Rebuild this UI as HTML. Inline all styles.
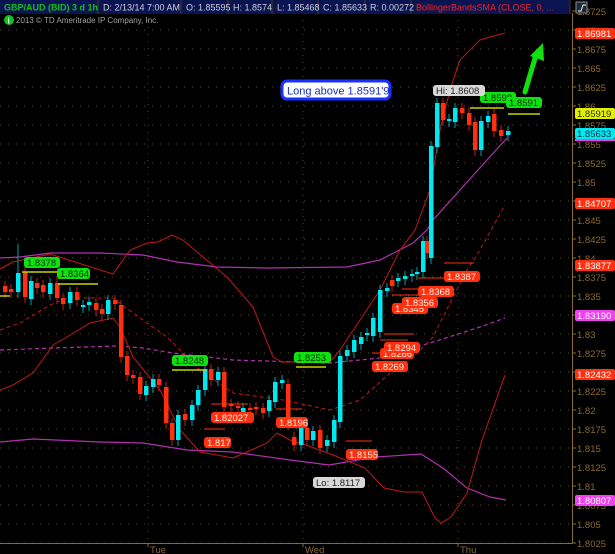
<!DOCTYPE html><html><head><meta charset="utf-8"><style>
body{margin:0;background:#000;width:615px;height:554px;overflow:hidden;font-family:"Liberation Sans",sans-serif}
svg{position:absolute;left:0;top:0}
</style></head><body>
<svg id="s" width="615" height="554" xmlns="http://www.w3.org/2000/svg" font-family="Liberation Sans, sans-serif"></svg>
<script>
var o='';
function Y(p){return 258+(1.84-p)*7600;}
for(var p=1.8725;p>1.8020;p-=0.0025){var y=Y(p).toFixed(1);o+='<line x1="0" x2="572" y1="'+y+'" y2="'+y+'" stroke="#5a4a28" stroke-dasharray="1 7"/>';
o+='<line x1="572" x2="576" y1="'+y+'" y2="'+y+'" stroke="#8a6a30"/>';
o+='<text x="577" y="'+(+y+4)+'" font-size="9.5" fill="#8a6a30">'+(Math.round(p*10000)/10000)+'</text>';}
[148,303,458].forEach(function(x){o+='<line x1="'+x+'" x2="'+x+'" y1="13" y2="543" stroke="#5a4a28" stroke-dasharray="1 6"/>';});
o+='<line x1="572.5" x2="572.5" y1="13" y2="543" stroke="#8a6a30"/><line x1="0" x2="573" y1="543.5" y2="543.5" stroke="#8a6a30"/>';
[['Tue',148],['Wed',303],['Thu',458]].forEach(function(d){o+='<line x1="'+d[1]+'" x2="'+d[1]+'" y1="543" y2="547" stroke="#8a6a30"/><text x="'+(d[1]+2)+'" y="553" font-size="9.5" fill="#8a6a30">'+d[0]+'</text>';});
function pl(pts,c,w,dash){o+='<polyline fill="none" stroke="'+c+'" stroke-width="'+w+'"'+(dash?' stroke-dasharray="'+dash+'"':'')+' points="'+pts+'"/>';}
pl('0,258 20,257 50,253 100,253 143,255 177,262 217,267 267,268 347,267 380,260 413,243 427,230 433,220 460,190 487,160 507,138','#b030b0',1.2);
pl('0,350 53,348 117,346 143,348 173,353 233,360 330,363 380,358 430,343 480,327 505,318','#b030b0',1.2,'4 3');
pl('0,442 33,439 100,442 143,443 187,450 233,452 290,460 329,465 376,457 421,454 443,468 467,488 490,497 506,500','#b030b0',1.2);
pl('0,269 13,262 50,254 113,274 130,250 147,243 158,242 172,235 183,240 203,257 227,277 253,307 273,357 282,362 330,362 340,350 360,320 380,290 400,250 415,230 430,190 440,130 450,90 460,60 480,40 490,37 505,33','#c01818',1);
pl('0,390 13,385 33,373 53,345 67,337 90,323 113,318 120,327 133,357 160,390 180,430 200,452 233,458 267,443 277,433 290,440 306,445 333,455 365,468 384,488 404,492 422,492 435,518 441,523 451,517 467,493 482,440 505,375','#c01818',1);
pl('0,330 20,323 50,305 67,298 113,298 133,313 167,337 200,370 233,393 283,400 330,410 360,400 390,373 413,357 433,337 453,297 467,270 480,250 505,205','#c01818',1,'4 3');
var C=[[3,286,292,0],[9,289,292,0],[16,273,292,1,244],[23,272,297,0],[29,281,299,1],[35,283,288,0],[41,285,292,0],[48,283,294,1],[55,283,298,0],[61,298,304,0],[68,292,303,1],[75,292,300,0],[81,305,307,1],[87,302,305,1],[94,303,310,0],[100,309,314,0],[106,300,314,1],[113,300,304,0],[119,305,357,0],[125,356,375,0],[131,375,378,0],[138,377,394,0],[144,386,395,1],[151,379,387,1],[157,379,385,0],[164,387,423,0],[170,423,440,0],[176,415,440,1],[183,414,420,0],[190,405,420,1],[196,390,405,1],[203,369,390,1],[209,369,380,0],[216,372,380,1],[222,372,407,0],[229,404,406,0],[236,406,408,0],[241,408,412,1],[248,408,410,0],[254,407,409,0],[261,408,413,0],[267,400,411,1],[273,382,402,1],[280,380,383,1],[286,384,424,0],[292,437,445,0],[299,427,445,1],[305,428,440,0],[311,431,440,1],[318,430,448,0],[325,440,446,1],[332,420,442,1],[338,356,422,1],[345,350,356,1],[352,340,352,1],[359,337,344,1],[365,333,335,1],[371,318,336,1],[378,290,332,1],[385,288,291,1],[390,280,286,0],[396,278,281,1],[403,276,279,1],[410,274,276,1],[415,272,274,1],[421,241,272,1],[425,241,253,0],[429,146,258,1],[435,103,147,1],[441,103,120,0],[447,119,121,1],[453,108,122,1],[460,108,113,0],[467,113,125,0],[473,122,150,0],[479,121,150,1],[486,116,122,1],[492,114,131,0],[499,130,136,0],[506,131,135,1]];
C.forEach(function(c){var col=c[3]?'#00e8f0':'#ff3010';var hi=c[4]||c[1]-5,lo=c[2]+6;
o+='<line x1="'+(c[0]+2)+'" x2="'+(c[0]+2)+'" y1="'+hi+'" y2="'+lo+'" stroke="'+(c[3]?'#00a0b0':'#c02010')+'"/>';
o+='<rect x="'+c[0]+'" y="'+c[1]+'" width="4.5" height="'+Math.max(2,c[2]-c[1])+'" fill="'+col+'"/>';});
[[0,10,296],[22,66,272],[58,98,284],[172,206,370],[296,326,367],[470,504,108],[508,540,114]].forEach(function(l){o+='<line x1="'+l[0]+'" x2="'+l[1]+'" y1="'+l[2]+'" y2="'+l[2]+'" stroke="#c8d400" stroke-width="1.5"/>';});
function lab(x,y,t,bg,fg,w){o+='<rect x="'+x+'" y="'+y+'" width="'+w+'" height="11" rx="3" fill="'+bg+'"/><text x="'+(x+3)+'" y="'+(y+9)+'" font-size="9.5" fill="'+fg+'">'+t+'</text>';}
lab(24,257,'1.8378','#10e010','#003000',36);lab(57,268,'1.8364','#10e010','#003000',33);
lab(172,355,'1.8248','#10e010','#003000',36);lab(294,352,'1.8253','#10e010','#003000',37);
lab(480,92,'1.8598','#10e010','#003000',36);lab(506,97,'1.8591','#10e010','#003000',36);
lab(433,85,'Hi: 1.8608','#d8d8d8','#202020',52);lab(313,477,'Lo: 1.8117','#d8d8d8','#202020',52);
[[211,412,'1.82027',43],[204,437,'1.817',27],[276,417,'1.8196',32],[346,449,'1.8155',32],[372,361,'1.8269',36],[380,348,'1.8286',34],[384,342,'1.8294',36],[392,303,'1.8345',36],[402,297,'1.8356',36],[418,286,'1.8368',36],[444,271,'1.8387',36]].forEach(function(r){o+='<line x1="'+(r[0])+'" x2="'+(r[0]+r[3]-6)+'" y1="'+(r[1]-8)+'" y2="'+(r[1]-8)+'" stroke="#ff3010"/>';lab(r[0],r[1],r[2],'#ff3010','#fff0e0',r[3]);});
[[28,'1.86981','#ff3010','#fff'],[108,'1.85919','#e0f000','#303000'],[128,'1.85633','#00e8f0','#003040'],[198,'1.84707','#ff3010','#fff'],[260,'1.83877','#ff3010','#fff'],[310,'1.83190','#f040f0','#fff'],[369,'1.82432','#ff3010','#fff'],[495,'1.80807','#f040f0','#fff']].forEach(function(r){o+='<rect x="575" y="'+r[0]+'" width="40" height="11" rx="2" fill="'+r[2]+'"/><text x="577" y="'+(r[0]+9)+'" font-size="9.5" fill="'+r[3]+'">'+r[1]+'</text>';});
o+='<rect x="575" y="139" width="40" height="2" fill="#f040f0"/>';
o+='<line x1="525" y1="92" x2="536" y2="55" stroke="#10e010" stroke-width="5" stroke-linecap="round"/><polygon points="530,56 543,43 544,61" fill="#10e010"/>';
o+='<rect x="282" y="81" width="108" height="18" rx="5" fill="#fff" stroke="#1a30ff" stroke-width="3"/><text x="287" y="94.5" font-size="11" fill="#1a30c0">Long above 1.8591\'9</text>';
o+='<rect x="0" y="0" width="570" height="14" fill="#0a1450"/>';
var cells=[[0,98,'GBP/AUD (BID) 3 d 1h','#10c020',1],[99,181,'D: 2/13/14 7:00 AM','#d0d0e0'],[182,228,'O: 1.85595','#d0d0e0'],[229,272,'H: 1.8574','#d0d0e0'],[273,318,'L: 1.85468','#d0d0e0'],[319,365,'C: 1.85633','#d0d0e0'],[366,411,'R: 0.00272','#d0d0e0'],[412,570,'BollingerBandsSMA (CLOSE, 0, ...','#ff2020']];
cells.forEach(function(c){o+='<line x1="'+c[1]+'" x2="'+c[1]+'" y1="0" y2="14" stroke="#4a3a20"/><text x="'+(c[0]+4)+'" y="10.5" font-size="9"'+(c[4]?' font-weight="bold"':'')+' fill="'+c[3]+'">'+c[2]+'</text>';});
o+='<rect x="576" y="2" width="11" height="11" fill="#1a2a3a" stroke="#888"/><polyline points="578,11 581,11 583,5 586,5" fill="none" stroke="#fff"/>';
o+='<circle cx="9" cy="20" r="5" fill="#10c020"/><text x="7.5" y="23.5" font-size="8" fill="#fff" font-weight="bold">i</text><text x="16" y="23" font-size="8" fill="#a0a0a0">2013 © TD Ameritrade IP Company, Inc.</text>';
document.getElementById('s').innerHTML=o;
</script></body></html>
